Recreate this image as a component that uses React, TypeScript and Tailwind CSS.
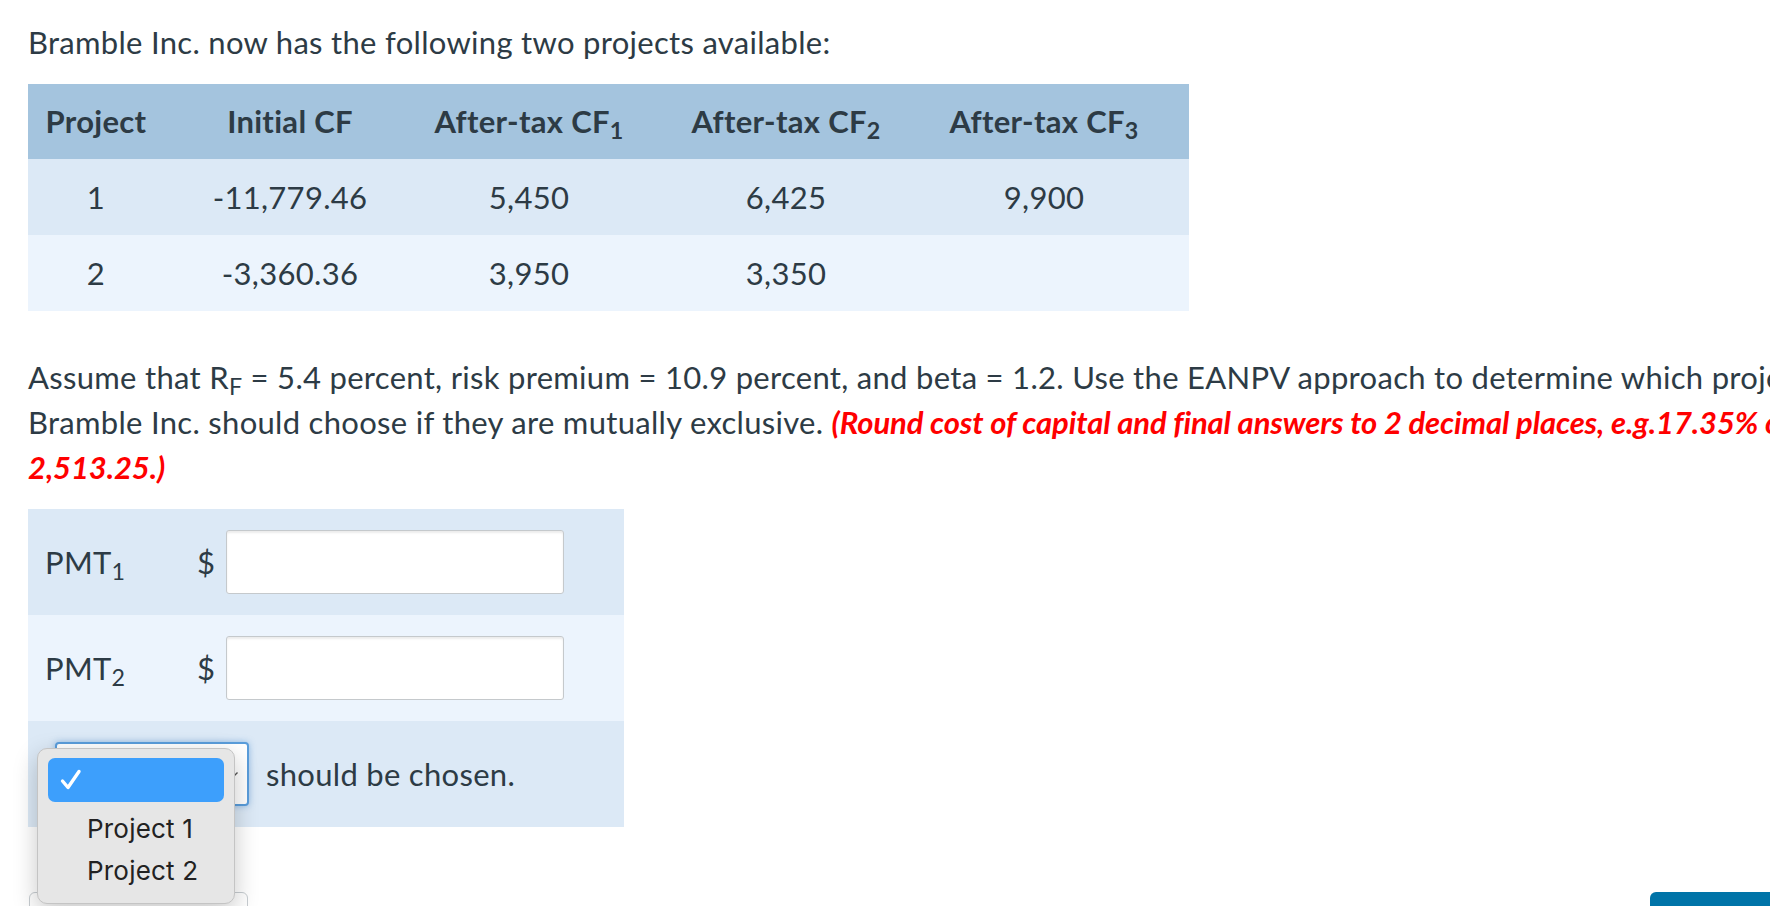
import React from "react";

const lato = { fontFamily: "Lato, 'Open Sans', sans-serif" };

const head = ["Project", "Initial CF", "After-tax CF", "After-tax CF", "After-tax CF"];
const subs = ["", "", "1", "2", "3"];
const rows = [
  ["1", "-11,779.46", "5,450", "6,425", "9,900"],
  ["2", "-3,360.36", "3,950", "3,350", ""],
];

const cols = "grid grid-cols-[136px_252px_226px_288px_228px_31px]";

function Check() {
  return (
    <svg width="24" height="24" viewBox="0 0 24 24" fill="none">
      <path d="M3.5 13 L9 19.5 L20 3.5" stroke="white" strokeWidth="3.4" strokeLinecap="round" strokeLinejoin="round" />
    </svg>
  );
}

function Money({ n, bg }: { n: string; bg: string }) {
  return (
    <div className={`flex h-[106px] items-center pl-[17px] ${bg}`}>
      <span className="w-[152px]">
        PMT<sub>{n}</sub>
      </span>
      <span className="w-[29px]">$</span>
      <input
        type="text"
        className="h-[64px] w-[338px] rounded-[3px] border border-[#c5c9cc] bg-white shadow-[inset_0_2px_2px_rgba(0,0,0,0.08)] outline-none"
      />
    </div>
  );
}

export default function App() {
  return (
    <div
      className="relative h-[906px] w-[1770px] overflow-hidden bg-white text-[31px] tracking-[0.3px] text-[#2d3b45]"
      style={lato}
    >
      <div className="pl-[28px]">
        <p className="pt-[20px] leading-[45px]">Bramble Inc. now has the following two projects available:</p>

        <div className="mt-[19px] w-[1161px]">
          <div className={`${cols} h-[75px] items-center bg-[#a4c4de] font-bold`}>
            {head.map((h, i) => (
              <div key={i} className="text-center">
                {h}
                {subs[i] && <sub>{subs[i]}</sub>}
              </div>
            ))}
            <div />
          </div>
          {rows.map((r, ri) => (
            <div
              key={ri}
              className={`${cols} h-[76px] items-center ${ri === 0 ? "bg-[#dce9f6]" : "bg-[#ecf4fd]"}`}
            >
              {r.map((c, ci) => (
                <div key={ci} className="text-center">
                  {c}
                </div>
              ))}
              <div />
            </div>
          ))}
        </div>

        <p className="mt-[44px] w-[1830px] leading-[45px]">
          Assume that R<sub>F</sub> = 5.4 percent, risk premium = 10.9 percent, and beta = 1.2. Use the EANPV
          approach to determine which project Bramble Inc. should choose if they are mutually exclusive.{" "}
          <span className="font-bold italic tracking-[-0.1px] text-[#ff0000]">
            (Round cost of capital and final answers to 2 decimal places, e.g.17.35% or 2,513.25.)
          </span>
        </p>

        <div className="mt-[19px] w-[596px]">
          <Money n="1" bg="bg-[#dce9f6]" />
          <Money n="2" bg="bg-[#ecf4fd]" />
          <div className="flex h-[106px] items-center bg-[#dce9f6] pl-[27px]">
            <div className="flex h-[64px] w-[194px] items-center justify-end rounded-[4px] border-2 border-[#5a9ddb] bg-white pr-[8px] shadow-[0_0_6px_rgba(70,140,210,0.5)]">
              <svg width="10" height="8" viewBox="0 0 10 8" fill="none">
                <path d="M1.5 2.5 L5 6 L8.5 2.5" stroke="#555" strokeWidth="1.4" />
              </svg>
            </div>
            <span className="ml-[17px]">should be chosen.</span>
          </div>
        </div>
      </div>

      <div className="mt-[65px] flex items-start">
        <div className="ml-[29px] h-[40px] w-[219px] rounded-[6px] border border-[#c7cdd1] bg-white" />
        <div className="ml-auto h-[40px] w-[120px] rounded-tl-[6px] bg-[#0074a8]" />
      </div>

      {/* open select menu */}
      <div
        className="absolute left-[37px] top-[748px] h-[156px] w-[198px] rounded-[10px] border border-[#c4c4c4] bg-[#e6e6e6] px-[10px] pt-[9px] tracking-normal shadow-[0_8px_24px_rgba(0,0,0,0.22)]"
        style={{ fontFamily: "Inter, 'Liberation Sans', sans-serif" }}
      >
        <div className="flex h-[44px] items-center rounded-[7px] bg-[#3d9ffc] pl-[11px]">
          <Check />
        </div>
        <div className="mt-[8px] pl-[39px] text-[26px] leading-[38px] tracking-[0.2px] text-[#222]">Project 1</div>
        <div className="mt-[4px] pl-[39px] text-[26px] leading-[38px] tracking-[0.2px] text-[#222]">Project 2</div>
      </div>
    </div>
  );
}
